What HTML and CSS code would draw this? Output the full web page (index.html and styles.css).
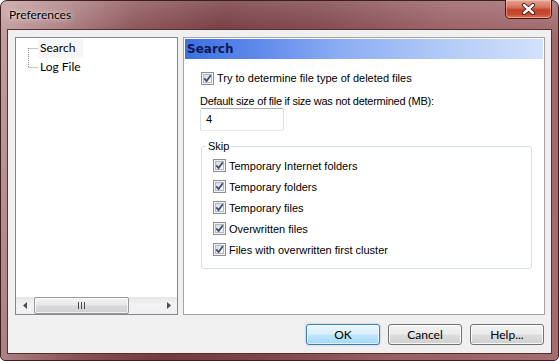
FILE: index.html
```html
<!DOCTYPE html>
<html>
<head>
<meta charset="utf-8">
<title>Preferences</title>
<link rel="stylesheet" href="styles.css">
</head>
<body>
<div class="window">
  <div class="titlebar">
    <span class="title">Preferences</span>
    <div class="close">
      <svg width="15" height="12" viewBox="0 0 15 12"><path d="M3 2 L12 10 M12 2 L3 10" stroke="#3b0e08" stroke-width="4" stroke-linecap="round"/><path d="M3 2 L12 10 M12 2 L3 10" stroke="#ffffff" stroke-width="2.4" stroke-linecap="round"/></svg>
    </div>
  </div>
  <div class="client">
    <div class="main">
      <div class="tree">
        <div class="tree-body">
          <svg class="tree-lines" width="10" height="38" viewBox="0 0 10 38"><path d="M0.5 9 V28.5 M0.5 9.5 H10 M0.5 28.5 H10" stroke="#8a8a8a" stroke-width="1" stroke-dasharray="1 1" fill="none"/></svg>
          <ul class="tree-items">
            <li class="selected">Search</li>
            <li>Log File</li>
          </ul>
        </div>
        <div class="hscroll">
          <div class="arrow"><svg width="4" height="7" viewBox="0 0 4 7"><path d="M4 0 L0 3.5 L4 7 Z" fill="#4d4d4d"/></svg></div>
          <div class="track">
            <div class="thumb"><svg width="7" height="7" viewBox="0 0 7 7"><path d="M0.5 0 V7 M3.5 0 V7 M6.5 0 V7" stroke="#4a4a4a" stroke-width="1"/></svg></div>
          </div>
          <div class="arrow"><svg width="4" height="7" viewBox="0 0 4 7"><path d="M0 0 L4 3.5 L0 7 Z" fill="#4d4d4d"/></svg></div>
        </div>
      </div>
      <div class="panel">
        <div class="panel-header">Search</div>
        <div class="panel-body">
          <div class="check first">
            <svg class="box" width="13" height="13" viewBox="0 0 13 13"><defs><linearGradient id="g1" x1="0" y1="0" x2="1" y2="1"><stop offset="0" stop-color="#d9dadc"/><stop offset="1" stop-color="#fbfbfb"/></linearGradient></defs><rect x="0.5" y="0.5" width="12" height="12" fill="#f4f4f4" stroke="#8e8f8f"/><rect x="2.5" y="2.5" width="8" height="8" fill="url(#g1)" stroke="#b5b8bc"/><path d="M3.3 6.4 L5.6 9 L9.8 3.3" stroke="#3d4f7c" stroke-width="1.8" fill="none"/></svg>
            <span>Try to determine file type of deleted files</span>
          </div>
          <div class="field-label">Default size of file if size was not determined (MB):</div>
          <div class="input">4</div>
          <fieldset class="group">
            <legend>Skip</legend>
            <div class="check">
              <svg class="box" width="13" height="13" viewBox="0 0 13 13"><rect x="0.5" y="0.5" width="12" height="12" fill="#f4f4f4" stroke="#8e8f8f"/><rect x="2.5" y="2.5" width="8" height="8" fill="url(#g1)" stroke="#b5b8bc"/><path d="M3.3 6.4 L5.6 9 L9.8 3.3" stroke="#3d4f7c" stroke-width="1.8" fill="none"/></svg>
              <span>Temporary Internet folders</span>
            </div>
            <div class="check">
              <svg class="box" width="13" height="13" viewBox="0 0 13 13"><rect x="0.5" y="0.5" width="12" height="12" fill="#f4f4f4" stroke="#8e8f8f"/><rect x="2.5" y="2.5" width="8" height="8" fill="url(#g1)" stroke="#b5b8bc"/><path d="M3.3 6.4 L5.6 9 L9.8 3.3" stroke="#3d4f7c" stroke-width="1.8" fill="none"/></svg>
              <span>Temporary folders</span>
            </div>
            <div class="check">
              <svg class="box" width="13" height="13" viewBox="0 0 13 13"><rect x="0.5" y="0.5" width="12" height="12" fill="#f4f4f4" stroke="#8e8f8f"/><rect x="2.5" y="2.5" width="8" height="8" fill="url(#g1)" stroke="#b5b8bc"/><path d="M3.3 6.4 L5.6 9 L9.8 3.3" stroke="#3d4f7c" stroke-width="1.8" fill="none"/></svg>
              <span>Temporary files</span>
            </div>
            <div class="check">
              <svg class="box" width="13" height="13" viewBox="0 0 13 13"><rect x="0.5" y="0.5" width="12" height="12" fill="#f4f4f4" stroke="#8e8f8f"/><rect x="2.5" y="2.5" width="8" height="8" fill="url(#g1)" stroke="#b5b8bc"/><path d="M3.3 6.4 L5.6 9 L9.8 3.3" stroke="#3d4f7c" stroke-width="1.8" fill="none"/></svg>
              <span>Overwritten files</span>
            </div>
            <div class="check">
              <svg class="box" width="13" height="13" viewBox="0 0 13 13"><rect x="0.5" y="0.5" width="12" height="12" fill="#f4f4f4" stroke="#8e8f8f"/><rect x="2.5" y="2.5" width="8" height="8" fill="url(#g1)" stroke="#b5b8bc"/><path d="M3.3 6.4 L5.6 9 L9.8 3.3" stroke="#3d4f7c" stroke-width="1.8" fill="none"/></svg>
              <span>Files with overwritten first cluster</span>
            </div>
          </fieldset>
        </div>
      </div>
    </div>
    <div class="buttons">
      <button class="btn default">OK</button>
      <button class="btn">Cancel</button>
      <button class="btn">Help...</button>
    </div>
  </div>
</div>
</body>
</html>
```

FILE: styles.css
```css
* { box-sizing: border-box; }
html, body { margin: 0; padding: 0; }
body {
  width: 559px;
  height: 361px;
  overflow: hidden;
  background: #ffffff;
  font-family: Lato, "Noto Sans", sans-serif;
}
.window {
  width: 559px;
  height: 361px;
  border: 1px solid #3b1f21;
  border-radius: 7px 7px 5px 5px;
  padding: 0 6px 6px 6px;
  display: flex;
  flex-direction: column;
  background:
    linear-gradient(180deg, rgba(255,255,255,0.18) 0, rgba(255,255,255,0.04) 28px, rgba(255,255,255,0) 40px),
    linear-gradient(100deg, #c6a0a1 0%, #ae8284 10%, #8a5256 22%, #74393e 36%, #7e444a 52%, #985e62 72%, #a46d70 100%);
}
.titlebar {
  height: 28px;
  display: flex;
  justify-content: space-between;
  align-items: flex-start;
  padding-left: 2px;
}
.title {
  margin-top: 6px;
  font-size: 12px;
  line-height: 16px;
  color: #000;
  text-shadow: 0 0 6px rgba(255,255,255,0.8), 0 0 3px rgba(255,255,255,0.6);
}
.close {
  width: 47px;
  height: 19px;
  margin-top: -1px;
  border: 1px solid #4a1710;
  border-top: none;
  border-radius: 0 0 5px 5px;
  display: flex;
  align-items: center;
  justify-content: center;
  background: linear-gradient(180deg, #e6a595 0%, #d7745f 40%, #c3402a 55%, #c84a31 80%, #dc7a58 100%);
  box-shadow: inset 0 0 0 1px rgba(255,220,210,0.45);
}
.client {
  flex: 1;
  border: 1px solid #553033;
  background: #f0f0f0;
  padding: 7px 6px 8px 7px;
  display: flex;
  flex-direction: column;
}
.main {
  height: 278px;
  display: flex;
  gap: 5px;
}
.tree {
  width: 163px;
  border: 1px solid #828790;
  background: #ffffff;
  display: flex;
  flex-direction: column;
}
.tree-body {
  flex: 1;
  display: flex;
  align-items: flex-start;
  padding: 1px 0 0 12px;
}
.tree-lines { display: block; flex: none; }
.tree-items {
  list-style: none;
  margin: 0;
  padding: 0;
  font-size: 12px;
  color: #000;
}
.tree-items li {
  height: 19px;
  line-height: 18px;
  padding: 0 2px;
}
.tree-items li.selected { background: #f6f6f6; }
.hscroll {
  height: 17px;
  display: flex;
  background: linear-gradient(180deg, #e6e6e6, #f2f2f2 40%, #f0f0f0);
}
.arrow {
  width: 17px;
  display: flex;
  align-items: center;
  justify-content: center;
}
.track {
  flex: 1;
  display: flex;
  align-items: stretch;
}
.thumb {
  width: 95px;
  margin-left: 1px;
  border: 1px solid #9a9a9a;
  border-radius: 2px;
  display: flex;
  align-items: center;
  justify-content: center;
  background: linear-gradient(180deg, #f4f4f4 0%, #e8e8e8 45%, #d9d9d9 55%, #d0d0d0 100%);
  box-shadow: inset 0 0 0 1px rgba(255,255,255,0.7);
}
.panel {
  width: 362px;
  border: 1px solid #a4a4a4;
  background: #ffffff;
  padding: 1px;
  display: flex;
  flex-direction: column;
}
.panel-header {
  height: 20px;
  line-height: 20px;
  padding-left: 2px;
  font-family: "DejaVu Sans", Verdana, sans-serif;
  font-weight: bold;
  font-size: 12px;
  color: #0b1a52;
  background: linear-gradient(90deg, #3e6fe4 0%, #5e89ec 20%, #8eaff3 45%, #b5cdf7 75%, #d3e1fb 100%);
}
.panel-body {
  padding: 11px 12px 0 15px;
  font-family: "Liberation Sans", Arial, sans-serif;
  font-size: 11px;
  color: #000;
}
.check {
  display: flex;
  align-items: center;
  height: 21px;
  gap: 3px;
}
.check.first { height: 16px; margin-left: 1px; }
.box { flex: none; display: block; }
.field-label {
  margin-top: 8px;
  height: 14px;
  line-height: 14px;
  letter-spacing: -0.25px;
}
.input {
  width: 84px;
  height: 23px;
  line-height: 21px;
  padding-left: 5px;
  border: 1px solid #dbdfe6;
  border-top-color: #abadb3;
  border-bottom-color: #e3e9ef;
  border-radius: 2px;
  background: #fff;
}
.group {
  margin: 8px 0 0 1px;
  width: 331px;
  padding: 2px 0 8px 4px;
  border: 1px solid #d5dfe5;
  border-radius: 3px;
  min-width: 0;
}
.group legend {
  padding: 0 2px;
  line-height: 14px;
  height: 14px;
}
.group .check { margin-left: 7px; }
.buttons {
  margin-top: 9px;
  display: flex;
  justify-content: flex-end;
  gap: 8px;
  padding-right: 1px;
}
.btn {
  width: 74px;
  height: 21px;
  padding: 0;
  font-family: Lato, "Noto Sans", sans-serif;
  font-size: 12px;
  color: #000;
  border: 1px solid #707070;
  border-radius: 3px;
  background: linear-gradient(180deg, #f2f2f2 0%, #ebebeb 48%, #dddddd 52%, #cfcfcf 100%);
  box-shadow: inset 0 0 0 1px rgba(255,255,255,0.8);
}
.btn.default {
  border-color: #3c7fb1;
  background: linear-gradient(180deg, #eaf6fd 0%, #d9f0fc 48%, #bee6fd 52%, #a7d9f5 100%);
  box-shadow: inset 0 0 0 1px rgba(255,255,255,0.6), 0 0 2px rgba(60,127,177,0.5);
}
```
